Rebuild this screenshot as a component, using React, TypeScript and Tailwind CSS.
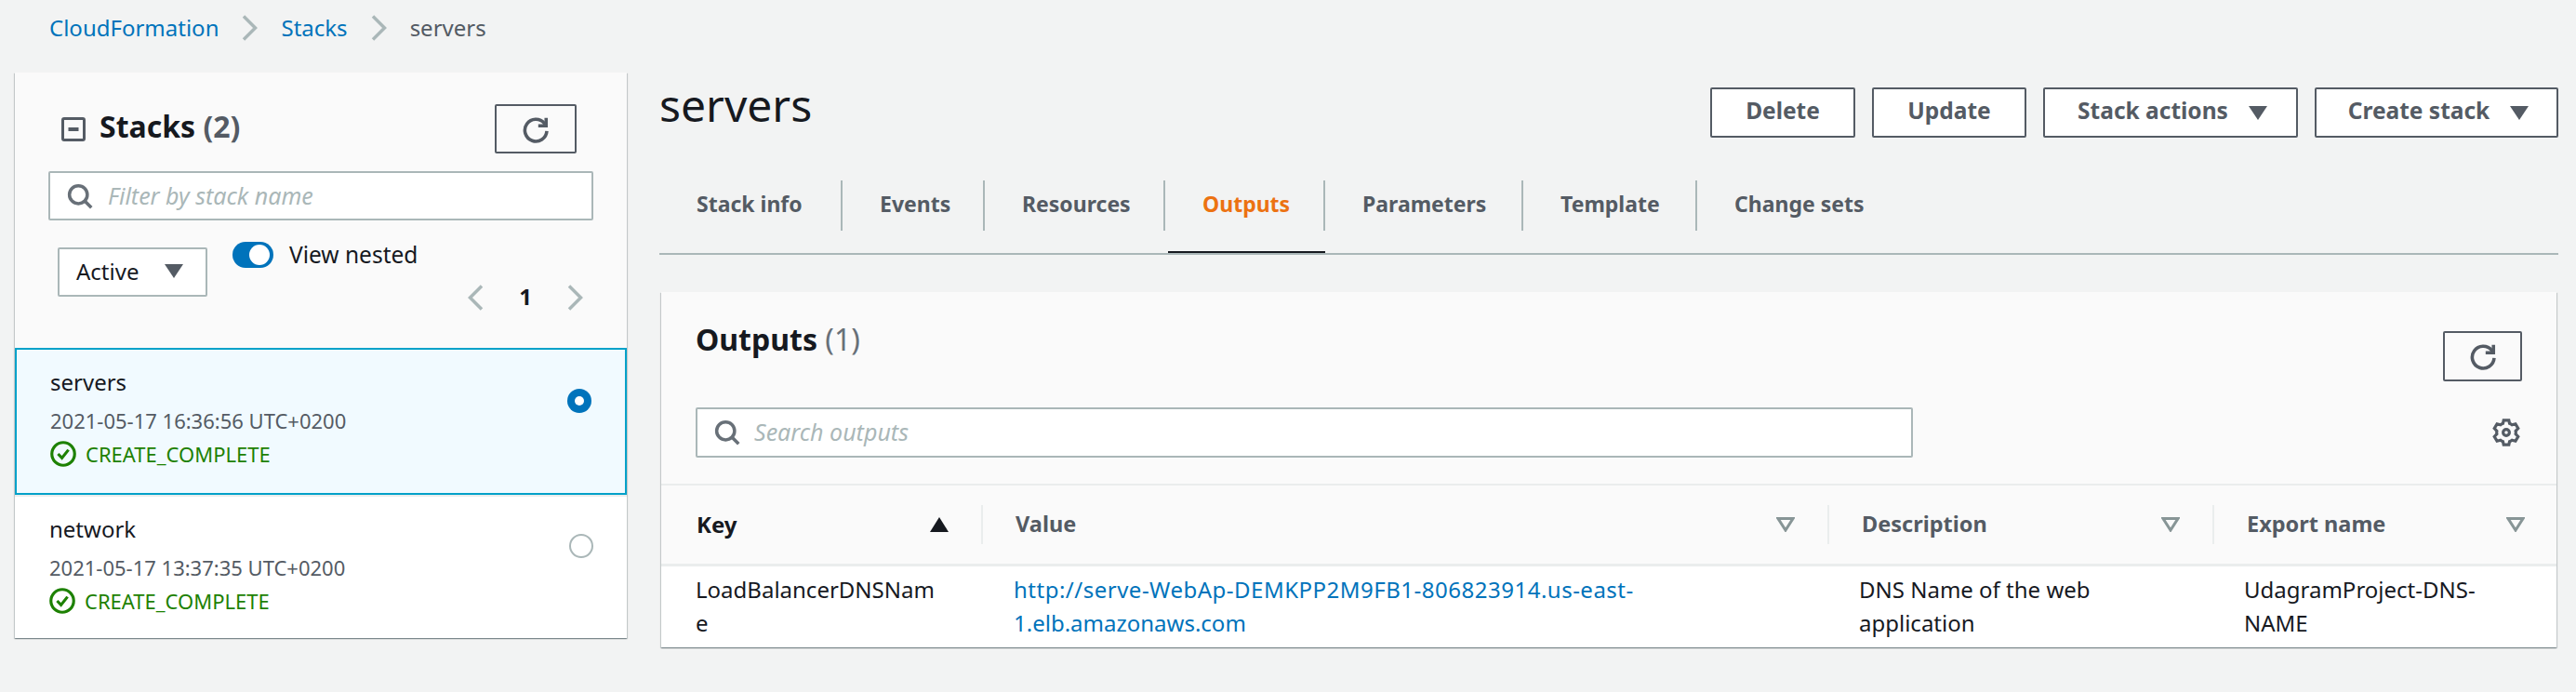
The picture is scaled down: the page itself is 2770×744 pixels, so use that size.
function Refresh({ size = 30 }: { size?: number }) {
  return (
    <svg width={size} height={size} viewBox="0 0 16 16" fill="none" stroke="#545b64" strokeWidth="1.9">
      <path d="M14 1.500V6H9.500" />
      <path d="M14.400 9a6.300 6.300 0 1 1-1.400-4.400L14 6" />
    </svg>
  );
}

function Gear() {
  return (
    <svg width="30" height="30" viewBox="0 0 16 16" fill="none" stroke="#545b64" strokeWidth="1.700" className="shrink-0 mr-[2px]">
      <path d="M13.500 8c0-.3 0-.6-.1-.9l1.400-1.500-1.500-2.500-2 .5c-.4-.3-.9-.6-1.400-.8L9.500 1h-3l-.4 1.800c-.5.2-1 .5-1.400.8l-2-.5-1.500 2.500 1.400 1.500c0 .3-.1.6-.1.9s0 .6.1.9l-1.400 1.500 1.500 2.500 2-.5c.4.3.9.6 1.400.8l.4 1.800h3l.4-1.800c.5-.2 1-.5 1.400-.8l2 .5 1.500-2.500-1.400-1.500c.1-.3.1-.6.1-.9z" />
      <circle cx="8" cy="8" r="1.800" />
    </svg>
  );
}

function SearchIcon() {
  return (
    <svg width="28" height="28" viewBox="0 0 16 16" fill="none" stroke="#687078" strokeWidth="2" className="shrink-0">
      <circle cx="7" cy="7" r="5.500" />
      <path d="M11 11l4 4" />
    </svg>
  );
}

function Caret() {
  return (
    <svg width="20" height="15" viewBox="0 0 20 15" className="shrink-0">
      <path d="M0 0h20L10 15z" fill="#545b64" />
    </svg>
  );
}

function Chevron({ left }: { left?: boolean }) {
  return (
    <svg width="17" height="28" viewBox="0 0 17 28" fill="none" stroke="#aab7b8" strokeWidth="3.500" className="shrink-0">
      <path d={left ? 'M15 1.500L2.500 14 15 26.500' : 'M2 1.500L14.500 14 2 26.500'} />
    </svg>
  );
}

function FilterCaret() {
  return (
    <svg width="20" height="16" viewBox="0 0 20 16" fill="none" stroke="#879596" strokeWidth="3" className="shrink-0">
      <path d="M2 1.500h16L10 14z" />
    </svg>
  );
}

function StatusComplete() {
  return (
    <div className="flex items-center h-[36px] text-[#1d8102] text-[22px]">
      <svg width="28" height="28" viewBox="0 0 16 16" fill="none" stroke="#1d8102" strokeWidth="1.800" className="shrink-0">
        <circle cx="8" cy="8" r="7" />
        <path d="M4.800 8l2.400 2.500 4-5" />
      </svg>
      <span className="ml-[10px]">CREATE_COMPLETE</span>
    </div>
  );
}

function Button({ label, caret, width }: { label: string; caret?: boolean; width: string }) {
  return (
    <button className={`flex items-center justify-center h-[54px] pb-[3px] bg-white border-2 border-[#545b64] rounded-[2px] font-bold text-[#545b64] text-[24.500px] ${caret ? 'pl-[4px]' : ''} ${width}`}>
      {label}
      {caret && (
        <span className="ml-[22px] mt-[3px]">
          <Caret />
        </span>
      )}
    </button>
  );
}

const tabs = [
  { label: 'Stack info', w: 'w-[197px]' },
  { label: 'Events', w: 'w-[153px]' },
  { label: 'Resources', w: 'w-[194px]' },
  { label: 'Outputs', w: 'w-[172px]', active: true },
  { label: 'Parameters', w: 'w-[213px]' },
  { label: 'Template', w: 'w-[187px]' },
  { label: 'Change sets', w: 'w-[220px]', last: true },
];

export default function App() {
  return (
    <div className="min-h-screen bg-[#f2f3f3] font-['Noto_Sans',sans-serif] text-[24px] text-[#16191f]">
      <div className="flex items-center h-[60px] pl-[53px]">
        <a className="text-[#0073bb]">CloudFormation</a>
        <span className="mx-[25px]"><Chevron /></span>
        <a className="text-[#0073bb]">Stacks</a>
        <span className="mx-[25px]"><Chevron /></span>
        <span className="text-[#545b64]">servers</span>
      </div>

      <div className="flex items-start pt-[18px] pl-[16px]">
        <aside className="w-[658px] h-[608px] flex flex-col bg-white shadow-[0_1px_1px_rgba(0,28,36,0.3),1px_1px_1px_rgba(0,28,36,0.15),-1px_1px_1px_rgba(0,28,36,0.15)]">
          <div className="h-[296px] bg-[#fafafa]">
            <div className="flex items-center justify-between pt-[34px] pl-[50px] pr-[54px]">
              <div className="flex items-center">
                <svg width="26" height="26" viewBox="0 0 26 26" fill="none" stroke="#545b64" strokeWidth="3">
                  <rect x="1.500" y="1.500" width="23" height="23" rx="1.500" />
                  <path d="M7.500 13h11" strokeWidth="4" />
                </svg>
                <h2 className="ml-[15px] -mt-[5px] text-[32px] font-bold">
                  Stacks <span className="text-[#545b64]">(2)</span>
                </h2>
              </div>
              <button className="flex items-center justify-center w-[88px] h-[53px] bg-[#fafafa] border-2 border-[#545b64] rounded-[2px]">
                <Refresh />
              </button>
            </div>
            <div className="flex items-center mt-[19px] mx-[36px] h-[53px] pl-[18px] bg-white border-2 border-[#aab7b8] rounded-[2px]">
              <SearchIcon />
              <span className="ml-[16px] italic text-[25px] text-[#aab7b8]">Filter by stack name</span>
            </div>
            <div className="flex items-start mt-[23px] pl-[46px] pr-[47px]">
              <div className="flex items-center justify-between w-[161px] h-[53px] mt-[6px] pl-[18px] pr-[24px] pb-[2px] bg-white border-2 border-[#aab7b8] rounded-[2px]">
                Active
                <Caret />
              </div>
              <div className="flex-1 ml-[27px]">
                <div className="flex items-center h-[28px]">
                  <div className="flex items-center justify-end w-[44px] h-[28px] pr-[4px] rounded-full bg-[#0073bb]">
                    <div className="w-[22px] h-[22px] rounded-full bg-white" />
                  </div>
                  <span className="ml-[17px] text-[24.500px]">View nested</span>
                </div>
                <div className="flex items-center justify-end mt-[15px]">
                  <Chevron left />
                  <span className="mx-[38px] -mt-[2px] font-bold">1</span>
                  <Chevron />
                </div>
              </div>
            </div>
          </div>

          <div className="flex justify-between h-[158px] pt-[17px] pl-[36px] pr-[36px] bg-[#f1faff] border-2 border-[#00a1c9]">
            <div>
              <div className="h-[36px] leading-[36px]">servers</div>
              <div className="h-[36px] leading-[36px] mt-[5px] text-[22px] text-[#545b64]">2021-05-17 16:36:56 UTC+0200</div>
              <StatusComplete />
            </div>
            <div className="flex items-center justify-center w-[26px] h-[26px] mt-[25px] rounded-full bg-[#0073bb]">
              <div className="w-[10px] h-[10px] rounded-full bg-white" />
            </div>
          </div>

          <div className="flex justify-between flex-1 pt-[17px] pl-[37px] pr-[36px] border-t-2 border-[#eaeded]">
            <div>
              <div className="h-[36px] leading-[36px]">network</div>
              <div className="h-[36px] leading-[36px] mt-[5px] text-[22px] text-[#545b64]">2021-05-17 13:37:35 UTC+0200</div>
              <StatusComplete />
            </div>
            <div className="w-[26px] h-[26px] mt-[23px] rounded-full bg-white border-2 border-[#aab7b8]" />
          </div>
        </aside>

        <main className="w-[2042px] ml-[35px]">
          <div className="flex items-start justify-between pt-[16px]">
            <h1 className="text-[48px] leading-[54px] -mt-[8px]">servers</h1>
            <div className="flex gap-[18px]">
              <Button label="Delete" width="w-[156px]" />
              <Button label="Update" width="w-[166px]" />
              <Button label="Stack actions" caret width="w-[274px]" />
              <Button label="Create stack" caret width="w-[262px]" />
            </div>
          </div>

          <nav className="flex mt-[46px] pb-[24px] border-b-2 border-[#aab7b8]">
            {tabs.map((t) => (
              <div
                key={t.label}
                className={`relative flex items-center h-[54px] pl-[40px] pb-[3px] font-bold text-[23px] ${t.w} ${t.last ? '' : 'border-r-2 border-[#aab7b8]'} ${t.active ? 'text-[#ec7211]' : 'text-[#545b64]'}`}
              >
                {t.label}
                {t.active && <div className="absolute left-[3px] -right-[2px] -bottom-[24px] h-[2px] bg-[#16191f]" />}
              </div>
            ))}
          </nav>

          <section className="mt-[40px] mx-[2px] h-[382px] bg-white shadow-[0_1px_1px_rgba(0,28,36,0.3),1px_1px_1px_rgba(0,28,36,0.15),-1px_1px_1px_rgba(0,28,36,0.15)]">
            <div className="h-[206px] bg-[#fafafa] pl-[37px] pr-[37px] pt-[42px]">
              <div className="flex items-start justify-between h-[54px]">
                <h2 className="text-[32px] font-bold leading-[32px] -mt-[7px]">
                  Outputs <span className="font-normal text-[#687078]">(1)</span>
                </h2>
                <button className="flex items-center justify-center w-[85px] h-[54px] border-2 border-[#545b64] rounded-[2px]">
                  <Refresh />
                </button>
              </div>
              <div className="flex items-center justify-between mt-[28px]">
                <div className="flex items-center w-[1309px] h-[54px] pl-[18px] bg-white border-2 border-[#aab7b8] rounded-[2px]">
                  <SearchIcon />
                  <span className="ml-[15px] italic text-[25px] text-[#aab7b8]">Search outputs</span>
                </div>
                <Gear />
              </div>
            </div>

            <div className="grid grid-cols-[344px_910px_414px_371px] h-[89px] items-center bg-[#fafafa] border-t-2 border-b-[3px] border-[#eaeded] font-bold text-[23.500px] text-[#545b64]">
              <div className="flex items-center justify-between h-[42px] pl-[38px] pr-[35px] text-[24px] text-[#16191f]">
                Key
                <svg width="20" height="16" viewBox="0 0 20 16"><path d="M10 0l10 16H0z" fill="#16191f" /></svg>
              </div>
              <div className="flex items-center justify-between h-[42px] pl-[35px] pr-[35px] border-l-2 border-[#eaeded]">
                Value
                <FilterCaret />
              </div>
              <div className="flex items-center justify-between h-[42px] pl-[35px] pr-[35px] border-l-2 border-[#eaeded]">
                Description
                <FilterCaret />
              </div>
              <div className="flex items-center justify-between h-[42px] pl-[35px] pr-[35px] border-l-2 border-[#eaeded]">
                Export name
                <FilterCaret />
              </div>
            </div>

            <div className="grid grid-cols-[344px_910px_414px_371px] pt-[7px] leading-[36px]">
              <div className="pl-[37px] pr-[42px] break-all">LoadBalancerDNSName</div>
              <div className="pl-[35px] text-[#0073bb]">
                <div className="tracking-[0.500px]">http://serve-WebAp-DEMKPP2M9FB1-806823914.us-east-</div>
                <div>1.elb.amazonaws.com</div>
              </div>
              <div className="pl-[34px] pr-[60px]">DNS Name of the web application</div>
              <div className="pl-[34px] pr-[30px]">UdagramProject-DNS-NAME</div>
            </div>
          </section>
        </main>
      </div>
    </div>
  );
}
